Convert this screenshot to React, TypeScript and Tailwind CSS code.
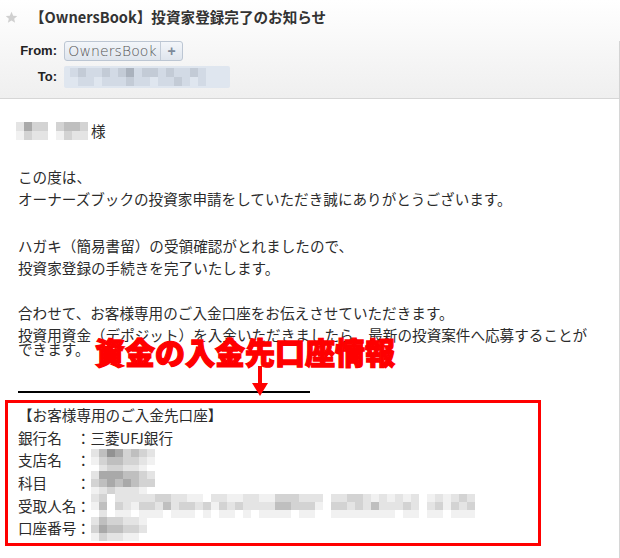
import React from "react";

const G: Record<string, string> = {
  "0": "bg-[#ffffff]",
  "1": "bg-[#f1f1f1]",
  "2": "bg-[#e4e4e4]",
  "3": "bg-[#d3d3d3]",
  "4": "bg-[#bfbfbf]",
  "5": "bg-[#a9a9a9]",
  "6": "bg-[#929292]",
  a: "bg-[#dfe6ef]",
  b: "bg-[#d2dae5]",
  c: "bg-[#c3cbd6]",
  d: "bg-[#aab2bd]",
};

function Mosaic({ rows, w, h }: { rows: string[]; w: number; h: number }) {
  return (
    <div className="flex flex-col">
      {rows.map((r, i) => (
        <div key={i} className="flex">
          {r.split("").map((c, j) => (
            <div key={j} className={G[c]} style={{ width: w, height: h }} />
          ))}
        </div>
      ))}
    </div>
  );
}

function Row({ label, children }: { label: string; children: React.ReactNode }) {
  return (
    <div className="flex items-center h-[22.7px] leading-[22.7px]">
      <span className="w-[58px] whitespace-nowrap">{label}</span>
      <span className="w-[14.5px] text-center">：</span>
      <div className="flex items-center">{children}</div>
    </div>
  );
}

export default function App() {
  return (
    <div className="relative w-[620px] h-[558px] overflow-hidden bg-white text-[#2b2b2b] font-['Noto_Sans_CJK_JP',sans-serif]">
      <header className="h-[99px] bg-gradient-to-b from-white to-[#efefef] border-b border-[#d6d6d6]">
        <div className="flex items-center h-[34px] pl-[5px]">
          <svg width="13" height="13" viewBox="0 0 24 24" className="shrink-0">
            <path
              d="M12 1.5l3.1 7.1 7.6.6-5.8 5 1.8 7.5L12 17.7l-6.7 4 1.8-7.5-5.8-5 7.6-.6z"
              fill="#d0d0d0"
            />
          </svg>
          <div className="ml-[12px] text-[14.6px] font-bold text-[#333] whitespace-nowrap">
            【OwnersBook】投資家登録完了のお知らせ
          </div>
        </div>
        <div className="h-[64px] border-r border-[#d4d4d4] font-['Liberation_Sans',Arial,sans-serif]">
          <div className="flex items-center mt-[7px]">
            <div className="w-[57px] text-right text-[13px] font-bold text-[#222]">From:</div>
            <div className="ml-[7px] flex h-[20px] rounded-[3px] border border-[#bcc6d3] bg-gradient-to-b from-[#f3f6fa] to-[#dfe5ed]">
              <div className="w-[95px] flex items-center justify-center text-[14px] font-light text-[#555] tracking-[0.1px] font-['DejaVu_Sans',sans-serif] [font-weight:200]">
                OwnersBook
              </div>
              <div className="w-[22px] border-l border-[#c3ccd8] flex items-center justify-center text-[14px] font-bold text-[#7d8a9a]">
                +
              </div>
            </div>
          </div>
          <div className="flex items-center mt-[5px]">
            <div className="w-[57px] text-right text-[13px] font-bold text-[#222]">To:</div>
            <div className="ml-[7px] h-[22px] w-[166px] bg-[#dfe6ef] flex items-center pl-[6px] rounded-[2px]">
              <Mosaic
                w={8}
                h={9}
                rows={["bcbbcbcdbccbcbbcb", "abbabbbcbbabbcbab"]}
              />
            </div>
          </div>
        </div>
      </header>

      <main className="h-[459px] border-r border-[#d6d6d6] pl-[5px] pt-[21px] text-[14.6px]">
        <div className="pl-[11px] flex items-center h-[22px] leading-[22px]">
          <Mosaic w={8} h={9} rows={["253303443", "132201322"]} />
          <span className="ml-[3px]">様</span>
        </div>

        <div className="pl-[13px] mt-[24px] leading-[22px] whitespace-nowrap">この度は、</div>
        <div className="pl-[13px] leading-[22px] whitespace-nowrap">
          オーナーズブックの投資家申請をしていただき誠にありがとうございます。
        </div>

        <div className="pl-[13px] mt-[25px] leading-[22px] whitespace-nowrap">
          ハガキ（簡易書留）の受領確認がとれましたので、
        </div>
        <div className="pl-[13px] leading-[22px] whitespace-nowrap">投資家登録の手続きを完了いたします。</div>

        <div className="pl-[13px] mt-[23px] leading-[22px] whitespace-nowrap">
          合わせて、お客様専用のご入金口座をお伝えさせていただきます。
        </div>
        <div className="pl-[13px] mt-[4px] leading-[14px] whitespace-nowrap">
          投資用資金（デポジット）を入金いただきましたら、最新の投資案件へ応募することが
        </div>
        <div className="pl-[13px] leading-[14px] whitespace-nowrap">できます。</div>

        <div className="ml-[13px] mt-[35px] h-[2px] w-[292px] bg-black" />

        <div className="mt-[7px] w-[536px] h-[146px] border-[3px] border-[#ff0000] pl-[10px] pt-[1px]">
          <div className="h-[22.7px] leading-[22.7px] whitespace-nowrap">【お客様専用のご入金先口座】</div>
          <Row label="銀行名">
            <span className="whitespace-nowrap">三菱UFJ銀行</span>
          </Row>
          <Row label="支店名">
            <Mosaic w={8} h={8} rows={["24653432", "13443321", "02332210"]} />
          </Row>
          <Row label="科目">
            <Mosaic w={8} h={8} rows={["25554432", "34545433", "12322210"]} />
          </Row>
          <Row label="受取人名">
            <Mosaic
              w={8}
              h={8}
              rows={[
                "230222223322110221122113332220223321212120121232",
                "140321332423323132322224433310332324222320231323",
                "020110111011101011010111101100111111110110110111",
              ]}
            />
          </Row>
          <Row label="口座番号">
            <Mosaic w={8} h={8} rows={["2433221", "3544332", "1322110"]} />
          </Row>
        </div>
      </main>

      <div className="absolute left-[95px] top-[336px] text-[30px] leading-[30px] font-black text-[#ff0000] whitespace-nowrap [-webkit-text-stroke:1.3px_#ff0000]">
        資金の入金先口座情報
      </div>
      <svg className="absolute left-[252px] top-[366px]" width="16" height="31" viewBox="0 0 16 31">
        <rect x="6" y="0" width="4" height="19" fill="#ff0000" />
        <polygon points="0,17 16,17 8,30" fill="#ff0000" />
      </svg>
    </div>
  );
}
